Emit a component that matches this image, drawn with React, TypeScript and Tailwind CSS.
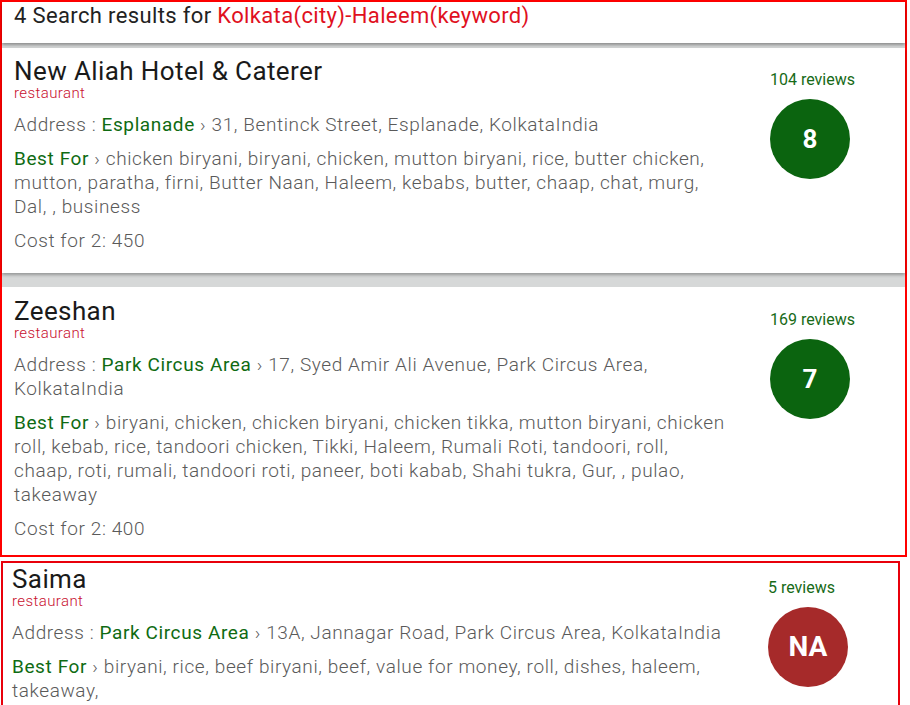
import React from "react";

type R = {
  name: string;
  area: string;
  address: string;
  best: string;
  cost: string;
  reviews: string;
  rating: string;
  good: boolean;
};

const data: R[] = [
  {
    name: "New Aliah Hotel & Caterer",
    area: "Esplanade",
    address: "31, Bentinck Street, Esplanade, KolkataIndia",
    best: "chicken biryani, biryani, chicken, mutton biryani, rice, butter chicken, mutton, paratha, firni, Butter Naan, Haleem, kebabs, butter, chaap, chat, murg, Dal, , business",
    cost: "450",
    reviews: "104 reviews",
    rating: "8",
    good: true,
  },
  {
    name: "Zeeshan",
    area: "Park Circus Area",
    address: "17, Syed Amir Ali Avenue, Park Circus Area, KolkataIndia",
    best: "biryani, chicken, chicken biryani, chicken tikka, mutton biryani, chicken roll, kebab, rice, tandoori chicken, Tikki, Haleem, Rumali Roti, tandoori, roll, chaap, roti, rumali, tandoori roti, paneer, boti kabab, Shahi tukra, Gur, , pulao, takeaway",
    cost: "400",
    reviews: "169 reviews",
    rating: "7",
    good: true,
  },
  {
    name: "Saima",
    area: "Park Circus Area",
    address: "13A, Jannagar Road, Park Circus Area, KolkataIndia",
    best: "biryani, rice, beef biryani, beef, value for money, roll, dishes, haleem, takeaway,",
    cost: "300",
    reviews: "5 reviews",
    rating: "NA",
    good: false,
  },
];

function Body({ r }: { r: R }) {
  return (
    <>
      <div className="w-[712px] shrink-0">
        <div className="text-[26px] leading-[28px] tracking-[0.4px] text-[#1a1a1a] font-normal">{r.name}</div>
        <div className="text-[15px] leading-[16px] tracking-[0.4px] text-[#c8102e] font-light">restaurant</div>
        <div className="mt-[12px] text-[19px] leading-[24px] tracking-[0.6px] text-[#5a5a5a] font-light">
          Address : <span className="text-[#0f6b12] font-normal">{r.area}</span> › {r.address}
        </div>
        <div className="mt-[10px] text-[19px] leading-[24px] tracking-[0.6px] text-[#5a5a5a] font-light">
          <span className="text-[#0f6b12] font-normal">Best For</span> › {r.best}
        </div>
        <div className="mt-[10px] text-[19px] leading-[24px] tracking-[0.6px] text-[#5a5a5a] font-light">
          Cost for 2: {r.cost}
        </div>
      </div>
      <div className="ml-[44px] flex flex-col items-start">
        <div className="mt-[13px] text-[16px] leading-[20px] text-[#176a17] whitespace-nowrap">
          {r.reviews}
        </div>
        <div
          className={
            r.good
              ? "mt-[9px] w-[80px] h-[80px] rounded-full bg-[#0b640f] flex items-center justify-center text-white font-bold text-[26px]"
              : "mt-[9px] w-[80px] h-[80px] rounded-full bg-[#a62a2a] flex items-center justify-center text-white font-bold text-[28px]"
          }
        >
          {r.rating}
        </div>
      </div>
    </>
  );
}

export default function App() {
  return (
    <div className="w-[910px] min-h-[705px] bg-white font-['Roboto',sans-serif]">
      <div className="w-[907px] border-2 border-[#f00] bg-[#d6d8d8]">
        <div className="relative z-10 h-[41px] bg-white pl-[12px] pt-[1px] text-[22px] leading-[26px] tracking-[0.36px] text-[#222] shadow-[0_2px_3px_rgba(0,0,0,0.35)]">
          4 Search results for <span className="text-[#e0101e]">Kolkata(city)-Haleem(keyword)</span>
        </div>
        <div className="relative z-[5] mt-[5px] flex bg-white pl-[12px] pt-[9px] pb-[20px] shadow-[0_2px_3px_rgba(0,0,0,0.3)]">
          <Body r={data[0]} />
        </div>
        <div className="mt-[14px] flex bg-white pl-[12px] pt-[10px] pb-[14px]">
          <Body r={data[1]} />
        </div>
      </div>
      <div className="ml-[1px] mt-[4px] w-[899px] border-2 border-[#e8000b] bg-white flex pl-[9px] pt-[2px] pb-[12px]">
        <Body r={data[2]} />
      </div>
    </div>
  );
}
